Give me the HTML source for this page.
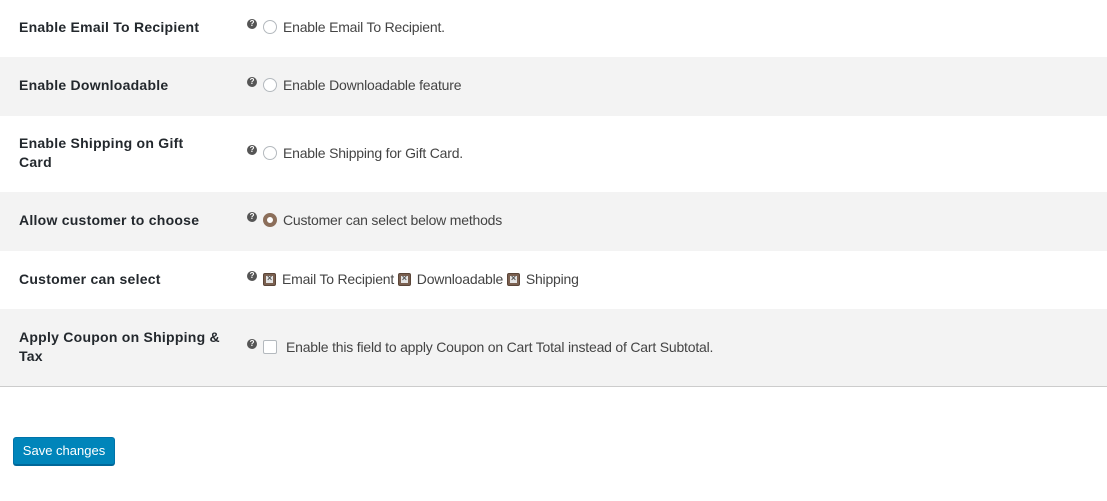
<!DOCTYPE html>
<html><head><style>
body{margin:0;width:1107px;height:501px;background:#fff;font-family:"Liberation Sans",sans-serif;font-size:14px;color:#444;position:relative;overflow:hidden}
.row{position:absolute;left:0;width:1107px}
.g{background:#f3f3f3}
.lbl{position:absolute;left:19px;font-weight:bold;color:#23282d;font-size:14px;line-height:19px;letter-spacing:0.25px}
.f{position:absolute;left:247px;white-space:nowrap;display:flex;align-items:center;font-size:14px;letter-spacing:-0.2px}
.q{display:inline-block;width:10px;height:10px;border-radius:50%;background:#555;color:#fff;font-size:8px;font-weight:bold;line-height:10px;text-align:center;margin-right:6px;position:relative;top:-3px}
.r{display:inline-block;border:1px solid #b4b9be;border-radius:50%;background:#fff;margin-right:6px;box-sizing:border-box;width:14px;height:14px}
.rs{border:4px solid #8b6e5a;background:#fff}
.x{display:inline-block;width:13px;height:13px;background:#7a6050;border-radius:2px;margin-right:6px;position:relative;box-sizing:border-box;border:1px solid #5a4538}
.x:after{content:"";position:absolute;left:2px;top:2px;width:7px;height:7px;background:#e4e4e4}
.x:before{content:"×";position:absolute;left:3px;top:-3px;font-size:9px;color:#555;z-index:2;font-weight:bold;line-height:15px}
.cb{display:inline-block;width:14px;height:14px;border:1px solid #b4b9be;border-radius:2px;background:#fff;box-sizing:border-box;margin-right:9px}
.btn{position:absolute;left:13px;top:437px;width:102px;height:28px;box-sizing:border-box;background:#0085ba;border:1px solid #0073aa;border-bottom-color:#006799;border-radius:3px;box-shadow:0 1px 0 #006799;color:#fff;font-size:13px;line-height:26px;text-align:center}
</style></head><body>
<div class="row" style="top:0;height:57px"></div>
<div class="lbl" style="top:18px">Enable Email To Recipient</div>
<div class="f" style="top:19px"><span class="q">?</span><span class="r"></span>Enable Email To Recipient.</div>

<div class="row g" style="top:57px;height:59px"></div>
<div class="lbl" style="top:76px">Enable Downloadable</div>
<div class="f" style="top:77px"><span class="q">?</span><span class="r"></span>Enable Downloadable feature</div>

<div class="lbl" style="top:134px">Enable Shipping on Gift<br>Card</div>
<div class="f" style="top:145px"><span class="q">?</span><span class="r"></span>Enable Shipping for Gift Card.</div>

<div class="row g" style="top:192px;height:59px"></div>
<div class="lbl" style="top:211px">Allow customer to choose</div>
<div class="f" style="top:212px"><span class="q">?</span><span class="r rs"></span>Customer can select below methods</div>

<div class="lbl" style="top:270px">Customer can select</div>
<div class="f" style="top:271px"><span class="q">?</span><span class="x"></span>Email To Recipient&nbsp;<span class="x"></span>Downloadable&nbsp;<span class="x"></span>Shipping</div>

<div class="row g" style="top:309px;height:77px;border-bottom:1px solid #ccc"></div>
<div class="lbl" style="top:328px">Apply Coupon on Shipping &amp;<br>Tax</div>
<div class="f" style="top:339px"><span class="q">?</span><span class="cb"></span>Enable this field to apply Coupon on Cart Total instead of Cart Subtotal.</div>

<div class="btn">Save changes</div>
</body></html>
